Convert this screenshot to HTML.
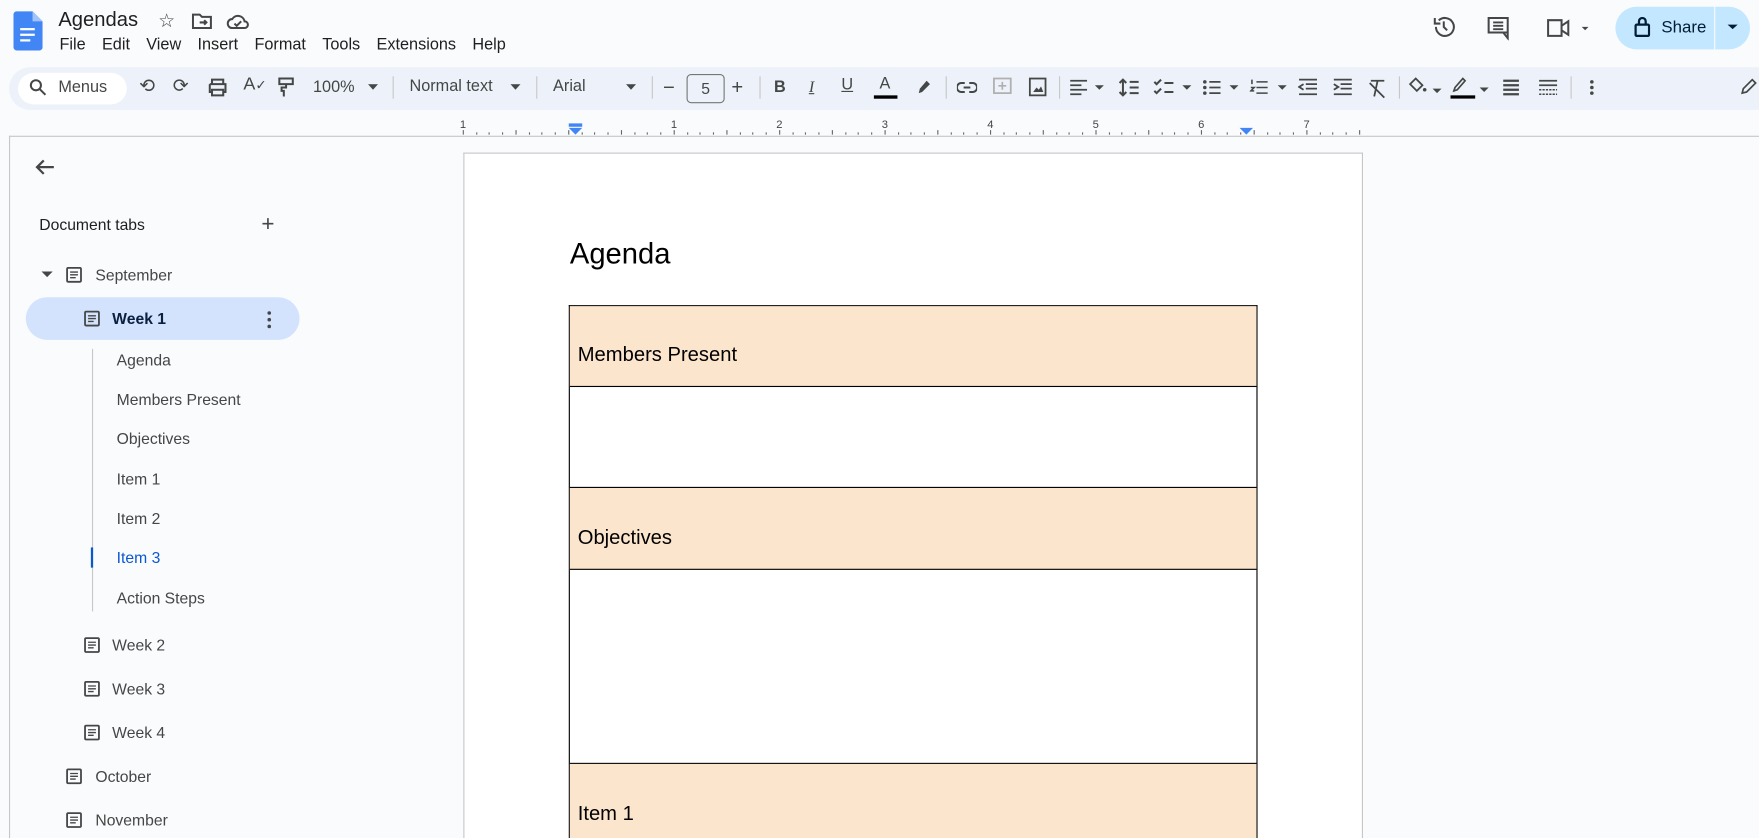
<!DOCTYPE html>
<html><head><meta charset="utf-8"><style>
html,body{margin:0;padding:0;width:1759px;height:838px;overflow:hidden;background:#f9fbfd;font-family:"Liberation Sans",Arial,sans-serif;}
#w{position:absolute;left:0;top:0;width:1568px;height:747px;overflow:hidden;transform:scale(1.12181);transform-origin:0 0;color:#1f1f1f;}
.a{position:absolute;}
.menu span{margin-right:14.5px;}
svg{position:absolute;}
.tb{font-size:14.5px;color:#444746;}
.side{font-size:14px;color:#444746;}
.row{position:absolute;left:0;width:612px;border-bottom:1px solid #000;}
.pe{background:#fce5cd;}
.row span{position:absolute;left:7px;bottom:17px;font-size:18px;color:#000;}
.ic{stroke:#444746;stroke-width:1.8;fill:none;}
</style></head><body><div id="w">
<svg style="left:12px;top:10px" width="26" height="35" viewBox="0 0 26 35"><path d="M3 0h14l9 9v23a3 3 0 0 1-3 3H3a3 3 0 0 1-3-3V3a3 3 0 0 1 3-3z" fill="#4285f4"/><path d="M17 0v9h9z" fill="#a1c2fa"/><rect x="6" y="15" width="13" height="2" fill="#fff"/><rect x="6" y="20" width="13" height="2" fill="#fff"/><rect x="6" y="25" width="9" height="2" fill="#fff"/></svg>
<div class="a" style="left:52px;top:7px;font-size:18px;">Agendas</div>
<div class="a" style="left:141px;top:9px;font-size:17px;color:#444">☆</div>
<svg style="left:171px;top:11px" width="18" height="15"><path class="ic" d="M1 2h6l2 2h8v10H1z" stroke-width="1.5"/><path class="ic" d="M7 9h6M11 7l2 2-2 2" stroke-width="1.4"/></svg>
<svg style="left:202px;top:12px" width="20" height="14"><path class="ic" d="M5 13a4 4 0 0 1 0-8 6 6 0 0 1 11 2 3 3 0 0 1 0 6z" stroke-width="1.5"/><path class="ic" d="M7 9l2 2 4-4" stroke-width="1.4"/></svg>
<div class="a menu" style="left:53px;top:32px;font-size:14.5px;"><span>File</span><span>Edit</span><span>View</span><span>Insert</span><span>Format</span><span>Tools</span><span>Extensions</span><span>Help</span></div>
<svg style="left:1276px;top:13px" width="22" height="22"><path class="ic" d="M4 11a8 8 0 1 0 2.5-5.8M3 3v5h5M11 6v5l3 3" stroke-width="2"/></svg>
<svg style="left:1325px;top:14px" width="22" height="22"><path class="ic" d="M2 2h17v13H2zM19 15v5l-4-5" stroke-width="2"/><path d="M6 6h9M6 9h9M6 12h9" stroke="#444746" stroke-width="1.6"/></svg>
<svg style="left:1378px;top:16px" width="42" height="18"><path class="ic" d="M2 2h12v14H2zM14 7l6-4v12l-6-4" stroke-width="2"/><path d="M32 8h6l-3 3z" fill="#444746"/></svg>
<div class="a" style="left:1440px;top:6px;width:120px;height:38px;background:#c2e7ff;border-radius:19px;"></div>
<div class="a" style="left:1528px;top:6px;width:1px;height:38px;background:#f9fbfd"></div>
<svg style="left:1457px;top:15px" width="14" height="18"><rect x="1" y="7" width="12" height="10" rx="1" fill="none" stroke="#001d35" stroke-width="2"/><path d="M4 7V4a3 3 0 0 1 6 0v3" fill="none" stroke="#001d35" stroke-width="2"/></svg>
<div class="a" style="left:1481px;top:16px;font-size:15px;color:#001d35;">Share</div>
<svg style="left:1540px;top:20px" width="10" height="8"><path d="M0 2h9l-4.5 4z" fill="#001d35"/></svg>
<div class="a" style="left:8px;top:60px;width:1560px;height:38px;background:#edf2fa;border-radius:24px 0 0 24px;"></div>
<div class="a" style="left:16px;top:65px;width:97px;height:28px;background:#fff;border-radius:14px;"></div>
<svg style="left:26px;top:70px" width="16" height="16"><circle cx="6" cy="6" r="4.5" class="ic"/><path class="ic" d="M9.5 9.5l5 5"/></svg>
<div class="a tb" style="left:52px;top:70px">Menus</div>
<div class="a tb" style="left:124px;top:67px;font-size:17px">⟲</div>
<div class="a tb" style="left:154px;top:67px;font-size:17px">⟳</div>
<svg style="left:185px;top:70px" width="18" height="16"><path class="ic" d="M4 5V1h10v4M2 5h14v7h-2M4 12H2V5M4 10h10v5H4z"/></svg>
<div class="a tb" style="left:217px;top:67px;font-size:16px">A<span style="font-size:12px">✓</span></div>
<svg style="left:247px;top:69px" width="16" height="18"><path class="ic" d="M2 1h12v5H2zM8 6v3H4v3h2v5"/></svg>
<div class="a tb" style="left:279px;top:70px">100%</div>
<svg style="left:328px;top:75px" width="10" height="6"><path d="M0 0h9l-4.5 5z" fill="#444746"/></svg>
<div class="a" style="left:350px;top:68px;width:1px;height:20px;background:#c7c7c7"></div>
<div class="a tb" style="left:365px;top:69px">Normal text</div>
<svg style="left:455px;top:75px" width="10" height="6"><path d="M0 0h9l-4.5 5z" fill="#444746"/></svg>
<div class="a" style="left:478px;top:68px;width:1px;height:20px;background:#c7c7c7"></div>
<div class="a tb" style="left:493px;top:69px">Arial</div>
<svg style="left:558px;top:75px" width="10" height="6"><path d="M0 0h9l-4.5 5z" fill="#444746"/></svg>
<div class="a" style="left:581px;top:68px;width:1px;height:20px;background:#c7c7c7"></div>
<div class="a tb" style="left:591px;top:68px;font-size:18px">−</div>
<div class="a" style="left:612px;top:66px;width:32px;height:24px;border:1px solid #747775;border-radius:4px;text-align:center;line-height:24px;font-size:14px;color:#444746">5</div>
<div class="a tb" style="left:652px;top:68px;font-size:18px">+</div>
<div class="a" style="left:677px;top:68px;width:1px;height:20px;background:#c7c7c7"></div>
<div class="a tb" style="left:690px;top:70px;font-weight:bold">B</div>
<div class="a tb" style="left:721px;top:70px;font-style:italic;text-decoration:underline;font-family:'Liberation Serif'">I</div>
<div class="a tb" style="left:750px;top:68px;text-decoration:underline">U</div>
<div class="a tb" style="left:784px;top:67px">A</div>
<div class="a" style="left:779px;top:85px;width:21px;height:3px;background:#000"></div>
<svg style="left:815px;top:70px" width="16" height="16"><path d="M4 13l1-4 6-7 3 3-7 7z" fill="#444746"/></svg>
<div class="a" style="left:843px;top:68px;width:1px;height:20px;background:#c7c7c7"></div>
<svg style="left:853px;top:73px" width="18" height="10"><path class="ic" d="M7 1H4a4 4 0 0 0 0 8h3M11 1h3a4 4 0 0 1 0 8h-3M6 5h6"/></svg>
<svg style="left:885px;top:69px" width="18" height="18"><path d="M1 1h15v13H1z" fill="none" stroke="#b0b0b0" stroke-width="1.6"/><path d="M8.5 4v7M5 7.5h7" stroke="#b0b0b0" stroke-width="1.5"/></svg>
<svg style="left:917px;top:69px" width="16" height="18"><rect x="1" y="1" width="14" height="15" fill="none" stroke="#444746" stroke-width="1.6"/><path d="M4 13l3-4 2 2 2-3 2 5z" fill="#444746"/></svg>
<div class="a" style="left:944px;top:68px;width:1px;height:20px;background:#c7c7c7"></div>
<svg style="left:953px;top:70px" width="34" height="16"><path d="M1 2h15M1 6h10M1 10h15M1 14h10" stroke="#444746" stroke-width="1.6"/><path d="M23 6h8l-4 4z" fill="#444746"/></svg>
<svg style="left:997px;top:69px" width="20" height="18"><path class="ic" d="M4 2v14M1 5l3-3 3 3M1 13l3 3 3-3M10 4h8M10 9h8M10 14h8" stroke-width="1.6"/></svg>
<svg style="left:1028px;top:70px" width="36" height="16"><path class="ic" d="M1 3l2 2 4-4M1 11l2 2 4-4M10 4h8M10 12h8" stroke-width="1.6"/><path d="M26 6h8l-4 4z" fill="#444746"/></svg>
<svg style="left:1072px;top:70px" width="36" height="16"><circle cx="2" cy="3" r="1.6" fill="#444746"/><circle cx="2" cy="8" r="1.6" fill="#444746"/><circle cx="2" cy="13" r="1.6" fill="#444746"/><path d="M6 3h10M6 8h10M6 13h10" stroke="#444746" stroke-width="1.6"/><path d="M24 6h8l-4 4z" fill="#444746"/></svg>
<svg style="left:1114px;top:70px" width="36" height="16"><path d="M2 1v4M1 8h3l-3 3h3M6 3h10M6 8h10M6 13h10" stroke="#444746" stroke-width="1.4" fill="none"/><path d="M25 6h8l-4 4z" fill="#444746"/></svg>
<svg style="left:1157px;top:70px" width="18" height="16"><path d="M1 1h16M7 5h10M7 9h10M1 14h16M5 5l-4 2.5L5 10" stroke="#444746" stroke-width="1.6" fill="none"/></svg>
<svg style="left:1188px;top:70px" width="18" height="16"><path d="M1 1h16M7 5h10M7 9h10M1 14h16M1 5l4 2.5L1 10" stroke="#444746" stroke-width="1.6" fill="none"/></svg>
<svg style="left:1219px;top:70px" width="18" height="18"><path d="M3 2h12M9 2l-3 14M2 4l13 13" stroke="#444746" stroke-width="1.6" fill="none"/></svg>
<div class="a" style="left:1247px;top:68px;width:1px;height:20px;background:#c7c7c7"></div>
<svg style="left:1256px;top:68px" width="30" height="18"><path d="M6 2l6 6-5 5-6-6z" fill="none" stroke="#444746" stroke-width="1.6"/><circle cx="14" cy="12" r="1.6" fill="#444746"/><path d="M21 11h8l-4 4z" fill="#444746"/></svg>
<svg style="left:1292px;top:68px" width="36" height="20"><path d="M4 13l1-3 7-8 2 2-7 8z" fill="none" stroke="#444746" stroke-width="1.5"/><rect x="1" y="17" width="22" height="3" fill="#000"/><path d="M27 10h8l-4 4z" fill="#444746"/></svg>
<svg style="left:1339px;top:70px" width="16" height="16"><path d="M1 2h14M1 6h14M1 10h14M1 14h14" stroke="#444746" stroke-width="2"/></svg>
<svg style="left:1371px;top:70px" width="18" height="16"><path d="M1 2h16M1 6h16" stroke="#444746" stroke-width="1.6"/><path d="M1 10h16M1 14h16" stroke="#444746" stroke-width="1.4" stroke-dasharray="2 1"/></svg>
<div class="a" style="left:1400px;top:68px;width:1px;height:20px;background:#c7c7c7"></div>
<svg style="left:1416px;top:70px" width="6" height="16"><circle cx="3" cy="3" r="1.6" fill="#444746"/><circle cx="3" cy="8" r="1.6" fill="#444746"/><circle cx="3" cy="13" r="1.6" fill="#444746"/></svg>
<svg style="left:1551px;top:69px" width="16" height="16"><path d="M2 14l1-4 8-8 3 3-8 8z" fill="none" stroke="#444746" stroke-width="1.5"/></svg>
<svg style="left:405px;top:102px" width="815" height="20">
<g font-family="Liberation Sans" font-size="10" fill="#444">
<text x="5" y="12">1</text><text x="193" y="12">1</text><text x="287" y="12">2</text><text x="381" y="12">3</text><text x="475" y="12">4</text><text x="569" y="12">5</text><text x="663" y="12">6</text><text x="757" y="12">7</text></g>
<path d="M8 14v4 M20 16v2 M31 16v2 M43 16v2 M55 14v4 M67 16v2 M78 16v2 M90 16v2 M102 14v4 M114 16v2 M125 16v2 M137 16v2 M149 14v4 M161 16v2 M172 16v2 M184 16v2 M196 14v4 M208 16v2 M219 16v2 M231 16v2 M243 14v4 M255 16v2 M266 16v2 M278 16v2 M290 14v4 M302 16v2 M313 16v2 M325 16v2 M337 14v4 M349 16v2 M360 16v2 M372 16v2 M384 14v4 M396 16v2 M407 16v2 M419 16v2 M431 14v4 M443 16v2 M454 16v2 M466 16v2 M478 14v4 M490 16v2 M501 16v2 M513 16v2 M525 14v4 M537 16v2 M548 16v2 M560 16v2 M572 14v4 M584 16v2 M595 16v2 M607 16v2 M619 14v4 M631 16v2 M642 16v2 M654 16v2 M666 14v4 M678 16v2 M689 16v2 M701 16v2 M713 14v4 M725 16v2 M736 16v2 M748 16v2 M760 14v4 M772 16v2 M783 16v2 M795 16v2 M807 14v4" stroke="#666" stroke-width="1"/>
<rect x="102" y="8" width="12" height="3" fill="#4285f4"/><path d="M102 12h12l-6 6z" fill="#4285f4"/><path d="M700 12h12l-6 6z" fill="#4285f4"/>
</svg>
<div class="a" style="left:8px;top:121px;width:1560px;height:1px;background:#c7c7c7"></div>
<div class="a" style="left:8px;top:121px;width:1px;height:626px;background:#c7c7c7"></div>
<svg style="left:31px;top:141px" width="18" height="16"><path d="M17 8H2M8 2L2 8l6 6" stroke="#444746" stroke-width="2" fill="none"/></svg>
<div class="a side" style="left:35px;top:192px;color:#1f1f1f;font-weight:500">Document tabs</div>
<div class="a" style="left:233px;top:189px;font-size:20px;color:#444746">+</div>
<svg style="left:37px;top:242px" width="10" height="6"><path d="M0 0h10l-5 5z" fill="#444746"/></svg>
<div class="a" style="left:23px;top:265px;width:244px;height:38px;background:#d3e3fd;border-radius:19px"></div>
<svg style="left:238px;top:277px" width="4" height="16"><circle cx="2" cy="2" r="1.6" fill="#444746"/><circle cx="2" cy="8" r="1.6" fill="#444746"/><circle cx="2" cy="14" r="1.6" fill="#444746"/></svg>
<div class="a" style="left:82px;top:311px;width:1px;height:234px;background:#c7c7c7"></div>
<div class="a" style="left:81px;top:488px;width:2px;height:18px;background:#0b57d0"></div>
<svg style="left:0;top:0" width="100" height="747">
<defs><g id="d"><rect x="0.8" y="0.8" width="12.4" height="12.4" rx="1" fill="none" stroke="#444746" stroke-width="1.6"/><path d="M3.5 4.5h7M3.5 7h7M3.5 9.5h5" stroke="#444746" stroke-width="1.2"/></g></defs>
<use href="#d" x="59" y="238"/><use href="#d" x="75" y="277"/><use href="#d" x="75" y="568"/><use href="#d" x="75" y="607"/><use href="#d" x="75" y="646"/><use href="#d" x="59" y="685"/><use href="#d" x="59" y="724"/>
</svg>
<div class="a side" style="left:85px;top:237px">September</div>
<div class="a side" style="left:100px;top:276px;color:#0b1f3f;font-weight:bold">Week 1</div>
<div class="a side" style="left:104px;top:313px">Agenda</div>
<div class="a side" style="left:104px;top:348px">Members Present</div>
<div class="a side" style="left:104px;top:383px">Objectives</div>
<div class="a side" style="left:104px;top:419px">Item 1</div>
<div class="a side" style="left:104px;top:454px">Item 2</div>
<div class="a side" style="left:104px;top:489px;color:#0b57d0">Item 3</div>
<div class="a side" style="left:104px;top:525px">Action Steps</div>
<div class="a side" style="left:100px;top:567px;font-weight:500">Week 2</div>
<div class="a side" style="left:100px;top:606px;font-weight:500">Week 3</div>
<div class="a side" style="left:100px;top:645px;font-weight:500">Week 4</div>
<div class="a side" style="left:85px;top:684px;font-weight:500">October</div>
<div class="a side" style="left:85px;top:723px;font-weight:500">November</div>
<div class="a" style="left:413px;top:136px;width:800px;height:611px;background:#fff;border:1px solid #c7c7c7;border-bottom:none;box-sizing:border-box;width:802px"></div>
<div class="a" style="left:508px;top:211px;font-size:26px;color:#000">Agenda</div>
<div class="a" style="left:507px;top:272px;width:612px;height:475px;border:1px solid #000;border-bottom:none;box-sizing:border-box;width:614px">
<div class="row pe" style="top:0;height:71px"><span>Members Present</span></div>
<div class="row" style="top:72px;height:89px"></div>
<div class="row pe" style="top:162px;height:72px"><span>Objectives</span></div>
<div class="row" style="top:235px;height:172px"></div>
<div class="row pe" style="top:408px;height:67px;border-bottom:none"><span style="bottom:auto;top:34px">Item 1</span></div>
</div>
</div></body></html>
